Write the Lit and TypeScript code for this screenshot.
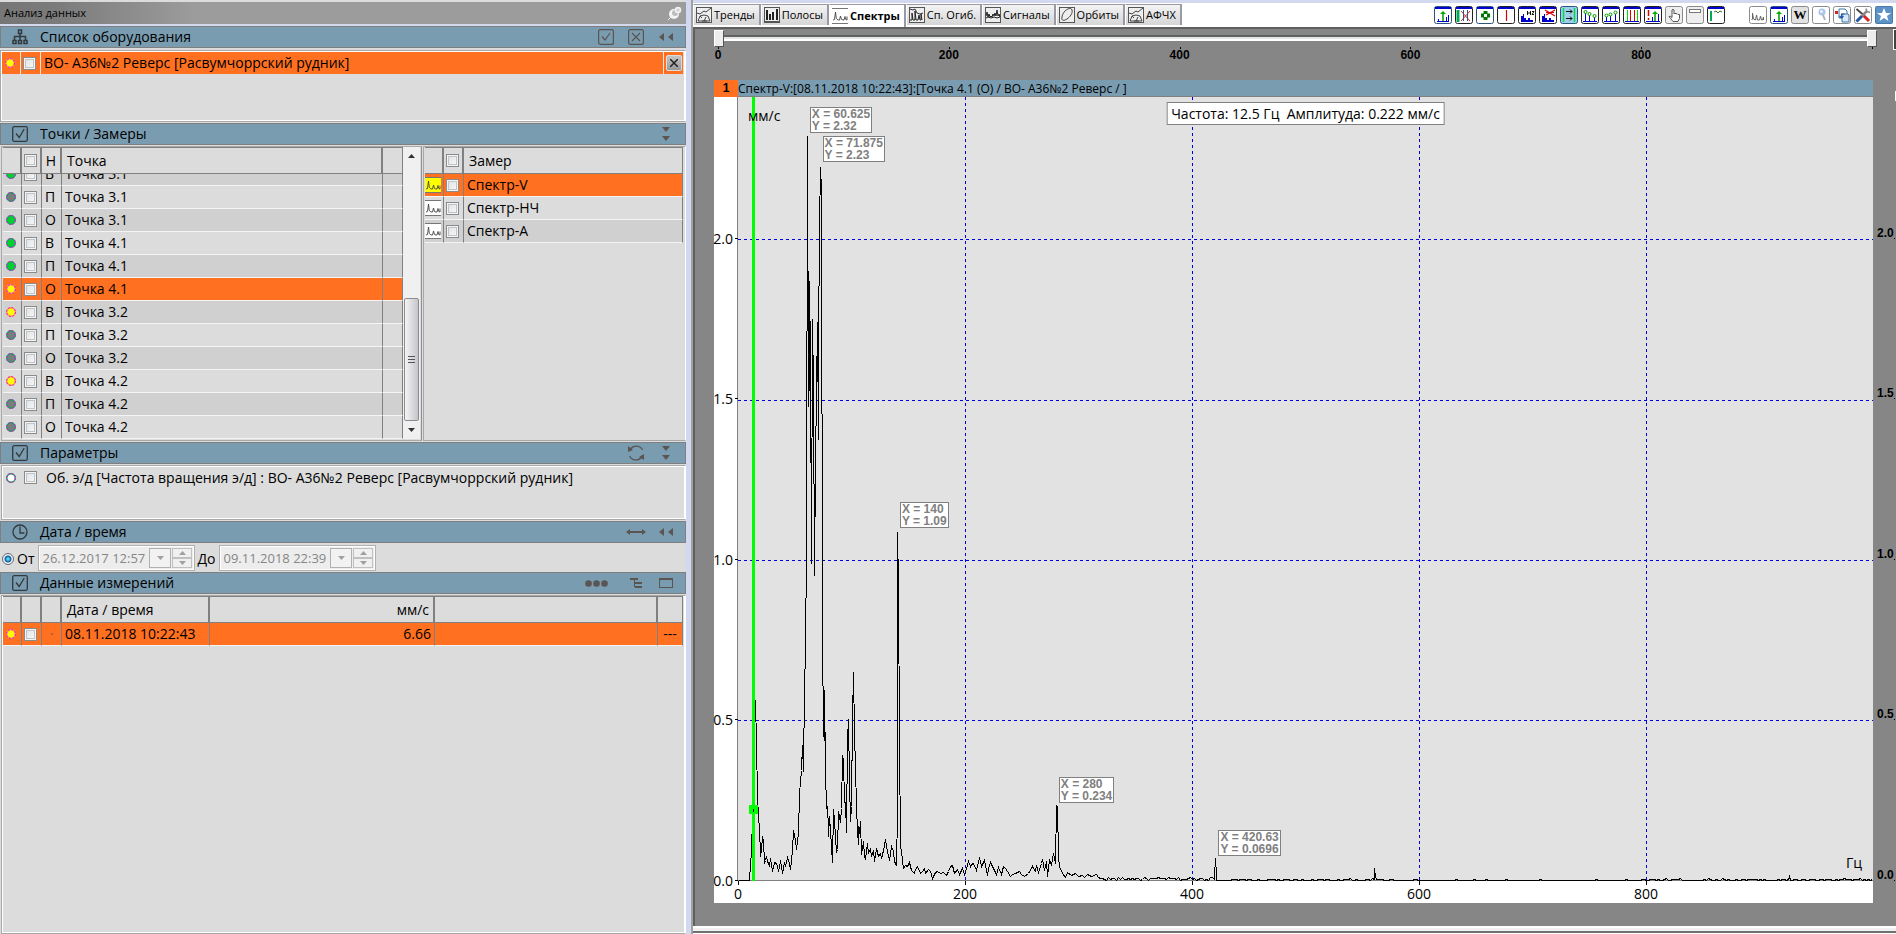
import { LitElement, html, css, svg, nothing } from "lit";
import type { TemplateResult, SVGTemplateResult } from "lit";
import { customElement, state } from "lit/decorators.js";
import { classMap } from "lit/directives/class-map.js";
import { styleMap } from "lit/directives/style-map.js";

type Tone = "green" | "yellow" | "gray" | "none";

const POINTS: Array<[Tone, string, string]> = [
  ["green", "В", "Точка 3.1"],
  ["gray", "П", "Точка 3.1"],
  ["green", "О", "Точка 3.1"],
  ["green", "В", "Точка 4.1"],
  ["green", "П", "Точка 4.1"],
  ["yellow", "О", "Точка 4.1"],
  ["yellow", "В", "Точка 3.2"],
  ["gray", "П", "Точка 3.2"],
  ["gray", "О", "Точка 3.2"],
  ["yellow", "В", "Точка 4.2"],
  ["gray", "П", "Точка 4.2"],
  ["gray", "О", "Точка 4.2"],
];

const MEASURES = ["Спектр-V", "Спектр-НЧ", "Спектр-А"];

/* Plot units: 1135 across = 1000 Hz, 784 high including the axis line. */
const PLOT_W = 1135;
const PLOT_H = 784;
const MAX_Y = 2.442;

/* Spectrum samples as x, height pairs in plot units. */
const SAMPLES: number[] = [
  0,0, 11,0, 12,17, 12,11, 13,33, 14,60, 15,71, 16,140, 17,180, 18,137, 19,85, 20,62, 21,53, 22,24, 23,30, 24,44, 25,40, 26,17,
  27,20, 28,24, 29,19, 31,15, 32,22, 34,9, 36,18, 38,17, 40,10, 41,13, 42,20, 44,7, 46,18, 47,14, 49,23, 51,17, 52,11, 54,30, 55,50, 57,40, 58,31,
  60,47, 61,87, 63,110, 64,135, 65,109, 66,193, 67,228, 68,333, 69,744, 70,474, 70,609, 71,490, 71,599, 72,523, 73,317,
  74,561, 75,493, 76,305, 77,417, 78,489, 79,558, 80,441, 80,530, 81,654, 82,713, 83,690, 84,247, 85,144, 85,163, 86,140, 86,190,
  87,110, 88,72, 88,80, 90,57, 90,44, 91,64, 92,50, 93,34, 94,18, 95,71, 96,60, 98,28, 99,31, 100,69, 102,58, 103,72, 104,125,
  105,121, 106,79, 107,77, 108,48, 109,142, 110,161, 111,99, 112,59, 113,74, 114,162, 115,208, 116,147, 117,113, 118,74,
  119,50, 120,36, 120,54, 121,47, 122,59, 123,26, 125,39, 126,24, 127,21, 129,37, 130,27, 132,32, 133,24, 135,30, 136,19, 138,32,
  140,24, 142,27, 143,22, 145,30, 147,41, 149,29, 151,20, 153,34, 155,29, 156,19, 158,15, 159,67, 159,348, 160,296, 161,139,
  162,34, 163,30, 164,19, 165,12, 167,15, 169,14, 171,18, 173,10, 176,7, 177,11, 179,14, 182,7, 184,9, 186,12, 187,7, 190,11, 192,9, 194,2, 197,8,
  199,9, 202,7, 205,8, 208,5, 210,9, 212,14, 214,15, 216,7, 219,11, 221,6, 224,12, 226,6, 228,12, 230,19, 232,14, 233,16,
  235,17, 238,10, 241,23, 243,14, 246,20, 249,5, 250,12, 252,18, 255,12, 258,6, 260,13, 263,6, 265,14, 267,12, 269,9, 272,4, 274,6, 277,7,
  281,9, 283,6, 286,4, 290,7, 294,14, 295,12, 297,9, 298,15, 300,8, 303,17, 304,21, 306,10, 308,19, 309,4, 311,21, 313,15, 315,27,
  317,17, 318,75, 319,74, 320,24, 321,14, 324,7, 327,3, 329,8, 333,5, 337,7, 340,4, 344,5, 346,3, 349,6, 353,4, 358,6, 360,3,
];

/* Low-level floor with the two small harmonics on it. */
function buildTrace(): string {
  const pts = [...SAMPLES];
  let seed = 17;
  const rnd = () => ((seed = (seed * 1103515245 + 12345) % 2147483648) / 2147483648);
  for (let x = 362; x <= PLOT_W; x += 2) {
    const top = x < 480 ? 3 : x < 600 ? 1.6 : x < 660 ? 2.2 : x < 900 ? 1.1 : 2.1;
    pts.push(x, Math.floor(rnd() * top + (x < 480 ? 0.6 : 0)));
    if (x === 476) pts.push(476, 5, 477, 22, 478, 5);
    if (x === 636) pts.push(636, 4, 636, 12, 637, 4);
    if (x === 1050) pts.push(1051, 4);
  }
  let d = "";
  for (let i = 0; i < pts.length; i += 2) {
    d += `${i ? "L" : "M"}${pts[i] + 0.5} ${PLOT_H - pts[i + 1] - 0.5}`;
  }
  return d;
}

const TRACE = buildTrace();

const PEAKS = [
  { f: 60.625, v: 2.32, x: "60.625", y: "2.32" },
  { f: 71.875, v: 2.23, x: "71.875", y: "2.23" },
  { f: 140, v: 1.09, x: "140", y: "1.09" },
  { f: 280, v: 0.234, x: "280", y: "0.234" },
  { f: 420.63, v: 0.0696, x: "420.63", y: "0.0696" },
];

const pct = (n: number) => `${n * 100}%`;

const ic = (w: number, h: number, body: SVGTemplateResult) =>
  html`<svg class="ic" width=${w} height=${h} viewBox="0 0 ${w} ${h}" aria-hidden="true">${body}</svg>`;

const DOTS: Record<Tone, [string, string]> = {
  green: ["#00d030", "#00b84a"],
  yellow: ["#ffff00", "#ff9a40"],
  gray: ["#7c7c7c", "#00b050"],
  none: ["#ffffff", "#10a050"],
};
const dot = (tone: Tone) =>
  html`<svg class="dot" width="10" height="10" viewBox="0 0 10 10" aria-hidden="true">
    <circle cx="5" cy="5" r="4.200" fill=${DOTS[tone][0]} stroke=${DOTS[tone][1]} stroke-width="1.400"/>
    <circle cx="5" cy="5" r="4.500" fill="none" stroke="#f010f0" stroke-dasharray="2 1.500"/>
  </svg>`;

const dark = "#5a5552";
const icons = {
  tree: ic(16, 16, svg`<g fill="none" stroke="#33393d" stroke-width="1.5"><path d="M6.5 1h3v3.5h-3zM8 5v6M2.5 11V7.5h11V11M1 11.5h3v3H1zM6.5 11.5h3v3h-3zM12 11.5h3v3h-3z"/></g>`),
  check: ic(16, 16, svg`<g fill="none" stroke="#33393d" stroke-width="1.3"><rect x=".7" y=".7" width="14.6" height="14.6" rx="1.5"/><path d="M4 7.5l3.2 4 5-8.5"/></g>`),
  clock: ic(16, 16, svg`<g fill="none" stroke="#33393d" stroke-width="1.3"><circle cx="8" cy="8" r="7"/><path d="M8 2.5V9h4.5"/></g>`),
  checkBtn: ic(16, 16, svg`<g fill="none" stroke=${dark} stroke-width="1.2"><rect x=".6" y=".6" width="14.8" height="14.8" rx="2"/><path d="M4 7.5l3 3.5 5-7"/></g>`),
  crossBtn: ic(16, 16, svg`<g fill="none" stroke=${dark} stroke-width="1.2"><rect x=".6" y=".6" width="14.8" height="14.8" rx="2"/><path d="M4 4l8 8M12 4l-8 8"/></g>`),
  left: ic(16, 8, svg`<path d="M6 0v8L1 4zM15 0v8l-5-4z" fill=${dark}/>`),
  down: ic(8, 14, svg`<path d="M0 0h8L4 5zM0 9h8l-4 5z" fill=${dark}/>`),
  refresh: ic(18, 18, svg`<g fill="none" stroke=${dark} stroke-width="1.3"><path d="M3.5 5A7 7 0 0 1 15.5 6M14.5 13A7 7 0 0 1 2.5 12"/></g><path d="M1 2v6l5-2zM17 16v-6l-5 3z" fill=${dark}/>`),
  wide: ic(20, 6, svg`<path d="M0 3l4-3v2h12V0l4 3-4 3V4H4v2z" fill=${dark}/>`),
  dots: ic(23, 7, svg`<g fill=${dark}><circle cx="3.5" cy="3.5" r="3.3"/><circle cx="11.5" cy="3.5" r="3.3"/><circle cx="19.5" cy="3.5" r="3.3"/></g>`),
  levels: ic(12, 10, svg`<g fill=${dark}><path d="M0 0h8v2H0zM5 4h7v2H5zM5 8h7v2H5zM4 2h1v7H4z"/></g>`),
  window: ic(14, 10, svg`<rect x=".5" y=".5" width="13" height="9" fill="none" stroke=${dark}/><path d="M0 0h14v2H0z" fill=${dark}/>`),
  pin: ic(15, 15, svg`<path d="M1 14l4-4" stroke="#e8e8e8"/><circle cx="7" cy="8" r="5" fill="#f4f4f4"/><circle cx="8" cy="7" r="3" fill="#bdbdbd"/><circle cx="11" cy="4" r="3.3" fill="#f0f0f0"/><circle cx="11" cy="4" r="1.5" fill="#cfcfcf"/>`),
};

const spectrumIcon = (bg: string) =>
  ic(16, 16, svg`<rect width="16" height="16" fill=${bg}/><path d="M0 .5h16M0 15.5h16" stroke="#777"/><path d="M1 12l1.500-.5 1-7.500.8 6.500 1.700 1.500h1.500l1-4 1 3.500 1.500.5h1l1-3.500.8 3 1.200.5V8.500" fill="none" stroke="#444" stroke-width=".9"/>`);

const tabFrame = svg`<rect x=".5" y=".5" width="15" height="15" fill="#eee" stroke="#555"/>`;
const gauge = ic(16, 16, svg`${tabFrame}<path d="M1 6l3 1 4-3 2 1 5-4M2 14l2-5 4-1 4 1 2 5zM8 14l2-4M4 9l2 2M6 14h5" fill="none" stroke="#444"/>`);
const TABS: Array<[string, TemplateResult]> = [
  ["Тренды", gauge],
  ["Полосы", ic(16, 16, svg`${tabFrame}<path d="M2 3h2v10H2zM5 7h2v6H5zM8 5h2v8H8zM12 2h2v11h-2z" fill="#222"/><path d="M1 14.5h14" stroke="#555"/>`)],
  ["Спектры", spectrumIcon("#fff")],
  ["Сп. Огиб.", ic(16, 16, svg`${tabFrame}<path d="M1 2l3 1 2-1 2 4 3 1 3-1" fill="none" stroke="#333"/><path d="M1 13h2V6l1 7h2V4l1 9h2l1-5 1 5h1V7l1 6" fill="none" stroke="#222"/>`)],
  ["Сигналы", ic(16, 16, svg`${tabFrame}<path d="M1 9l1-4 1 5 1-3 1 3 1-1 1 1 1-3 1 2 1-3 1 3 1-6 1 6 1-2 1 3M1 11l2-1 3 1 3-1 3 1 3-1" fill="none" stroke="#222"/>`)],
  ["Орбиты", ic(16, 16, svg`${tabFrame}<path d="M3 10c-1 4 2 4 5 2s6-6 5-9-5-1-7 1-3 5-3 6z" fill="none" stroke="#444"/>`)],
  ["АФЧХ", gauge],
];

/* Toolbar glyphs share a window-like frame with a blue caption strip. */
const win = (body: SVGTemplateResult, edge = "#222") =>
  svg`<rect x=".5" y=".5" width="17" height="17" rx="2" fill="#fff" stroke=${edge}/><path d="M1 1h16v2H1z" fill="#00c"/>${body}`;
const soft = (body: SVGTemplateResult, bg = "#eee") =>
  svg`<rect x=".5" y=".5" width="17" height="17" rx="2" fill=${bg} stroke="#8a8a8a"/>${body}`;
const arrowBars = svg`<path d="M9 15V8" stroke="#090" stroke-width="1.500"/><path d="M9 5l3 3H6z" fill="#0a0"/><path d="M4.500 15v-2M12.500 15v-4M14.500 15V9M3 15.500h12" stroke="#00c"/>`;
const hz = svg`<path d="M3 16v-6h2v-2h1v4h2v2h2v-2h2v2h3v2z" fill="#00c"/>`;
const TOOLS: Array<[string, SVGTemplateResult]> = [
  ["Пик", win(arrowBars, "#27557c")],
  ["Сброс зоны", win(svg`<path d="M3 4v12" stroke="#0a5" stroke-width="3"/><path d="M6 5l9 10M15 5L6 15" stroke="#d22"/><path d="M8.500 4v11M12.500 4v11" stroke="#357"/>`)],
  ["Перемещение", win(svg`<path d="M7.500 5h4v2.500H14v4h-2.500V14h-4v-2.500H5v-4h2.500z" fill="#070"/><path d="M8 8h3v3H8z" fill="#fff"/>`, "#27557c")],
  ["Курсор", win(svg`<path d="M9.500 4v11" stroke="#d00" stroke-width="1.200"/>`)],
  ["Герцы", win(svg`${hz}<path d="M9.500 5v4M12.500 5v4M9 7h3M14 5.500h2l-2 3h2" stroke="#111" fill="none"/>`)],
  ["Убрать герцы", win(svg`${hz}<path d="M6 4l10 6M16 4L7 9M7 6.500h8" stroke="#d00" stroke-width="1.200"/>`)],
  ["Границы", svg`<rect x=".5" y=".5" width="17" height="17" rx="2" fill="#9fd0ea" stroke="#27557c"/><path d="M3.500 2v14M14.500 2v14" stroke="#0d4" stroke-width="1.500"/><path d="M6 5.500h6M10 3.500l2 2-2 2M6 12.500h6M10 10.500l2 2-2 2" stroke="#111" fill="none"/>`],
  ["Гармоники", win(svg`<path d="M4.500 15V7M8.500 15V9M13.500 15v-4M2 15.500h14" stroke="#00c"/><g fill="#fff" stroke="#090"><circle cx="4.500" cy="6" r="1.500"/><circle cx="8.500" cy="8" r="1.500"/><circle cx="13.500" cy="10" r="1.500"/></g>`)],
  ["Боковые", win(svg`<path d="M4.500 15v-4M8.500 15V9M13.500 15V7M2 15.500h14" stroke="#00c"/><g fill="#fff" stroke="#090"><circle cx="4.500" cy="9.500" r="1.500"/><circle cx="8.500" cy="8.500" r="1.500"/><circle cx="13.500" cy="6.500" r="1.500"/></g>`)],
  ["Полоса", win(svg`<path d="M4.500 4v11M14.500 4v11" stroke="#0d0"/><path d="M7.500 4v11M11.500 4v11" stroke="#d00"/><path d="M2 15.500h14" stroke="#00c"/>`)],
  ["Тревога", win(svg`<path d="M4.500 4v6M4.500 12v2" stroke="#d00" stroke-width="1.500"/><path d="M8.500 15v-4M14.500 15V8M2 15.500h14" stroke="#00c"/><path d="M11 15V8" stroke="#090" stroke-width="1.500"/><path d="M11 5l3 3H8z" fill="#0a0"/>`)],
  ["Рука", soft(svg`<path d="M7 10V4q1-1.500 2 0v4l1-1 1 1 1-.5 1 1 1.500 0v4l-1.500 3H8l-4-5q1-1 3 1z" fill="#fff" stroke="#555"/>`)],
  ["Панель", soft(svg`<rect x="3.500" y="3.500" width="11" height="3" fill="#fff" stroke="#777"/>`)],
  ["Каскад", win(svg`<path d="M4 5v10" stroke="#0a5" stroke-width="2"/><path d="M7 6l2-1 2 2 2-2 2 1" stroke="#373" fill="none"/>`)],
];
const TOOLS2: Array<[string, SVGTemplateResult]> = [
  ["Спектр", soft(svg`<path d="M2.500 14l1-1V7l1 6 2 1 1-5 1 5h2l1-4 1 4h1l1-3v3" fill="none" stroke="#666"/>`, "#fff")],
  ["Пик графика", win(arrowBars, "#27557c")],
  ["Отчёт Word", soft(svg`<text x="9" y="13" text-anchor="middle" class="w">W</text>`, "#e2e2e2")],
  ["Поиск", soft(svg`<circle cx="10" cy="6" r="3.500" fill="#a9c4e4"/><circle cx="9.500" cy="5.500" r="1.500" fill="#eef"/><path d="M11 9l2 5" stroke="#a9b4c4" stroke-width="2"/>`, "#fff")],
  ["Обмен", soft(svg`<path d="M6 3h6l2 2v7H6z" fill="#fff" stroke="#37a"/><path d="M9 8h6l1 1v7H9z" fill="#dbe8fa" stroke="#37a"/><path d="M2 5h3v3H2z" fill="#d22"/><path d="M8.500 12V8h3M8.500 12l-2-2M8.500 12l2-2" stroke="#25a" fill="none" stroke-width="1.200"/>`, "#fff")],
  ["Настройки", soft(svg`<path d="M2.500 3l7 6" stroke="#444" stroke-width="1.800"/><path d="M9 9l6 6" stroke="#d22" stroke-width="3"/><path d="M13 5L8 10" stroke="#888" stroke-width="2.500"/><path d="M12 2.500l1 3 3 1" stroke="#888" stroke-width="1.500" fill="none"/><path d="M8 10l-5.500 5.500" stroke="#25a" stroke-width="3"/>`, "#fff")],
  ["Избранное", svg`<rect x=".5" y=".5" width="17" height="17" rx="1" fill="#5c92c6" stroke="#4a7aa8"/><path d="M9 2l2 5h5l-4 3 1.500 5L9 12l-4.500 3L6 10 2 7h5z" fill="#fff"/>`],
];

type BarButton = { icon: TemplateResult; label: string; wide?: boolean };

@customElement("app-root")
export class AppRoot extends LitElement {
  @state() private tab = 2;

  static styles = css`
    :host {
      display: block;
      height: 100vh;
      min-height: 720px;
      overflow: hidden;
      color: #000;
      font: 14px/20px "Open Sans", "Noto Sans", sans-serif;
    }
    *, *::before, *::after { box-sizing: border-box; }
    button { font: inherit; color: inherit; padding: 0; border: 0; background: none; }
    .ic { display: block; }
    .app { display: flex; height: 100%; background: #d2d9ee; }

    .side { flex: 0 0 686px; display: flex; flex-direction: column; padding-top: 2px; background: #dcdcdc; }
    .caption {
      display: flex; align-items: center; justify-content: space-between;
      height: 24px; padding: 0 4px; border-bottom: 2px solid #d2d9ee;
      background: linear-gradient(90deg, #767676, #7c7c7c 60px, #9c9c9c 195px, #9c9c9c);
      font-size: 11px;
    }
    .bar {
      display: flex; align-items: center; flex: none;
      height: 22px; padding: 0 4px 0 11px;
      border: 1px solid #7f7f7f; background: #7a9cb0;
    }
    .bar h2 { flex: 1; margin: 0 0 0 12px; font-size: 14px; font-weight: 400; line-height: 20px; }
    .bar button { width: 30px; height: 20px; display: grid; place-items: center; }
    .bar button.wide { width: 50px; }
    .box { flex: none; border: 1px solid #a8a8a8; border-right-color: #fff; outline: 1px solid #fff; outline-offset: -2px; padding: 1px; background: #dcdcdc; }

    .list { height: 72px; margin: 2px 0 1px; padding-right: 2px; }
    .item { display: grid; grid-template-columns: 18px 20px 1fr 20px; height: 22px; background: #ff7020; }
    .item > * { display: flex; align-items: center; border-left: 1px solid #f0e8e0; }
    .item > *:first-child { border-left: 0; }
    .item .name { padding-left: 3px; }
    .close { width: 16px; height: 16px; margin-left: 2px; display: grid; place-items: center; border: 1px solid #ddd; border-radius: 2px; background: linear-gradient(#c4c4c4, #999); }

    input[type="checkbox"] {
      appearance: none; display: block; width: 13px; height: 13px; margin: 0 0 0 2px;
      border: 1px solid #8a8b8b; background: linear-gradient(135deg, #dcdfe2, #fafafa);
      box-shadow: inset 0 0 0 1px #f4f4f4, inset 0 0 0 2px #c0c4c8;
    }
    .dot { display: block; margin-left: 3px; }

    table { border-collapse: separate; border-spacing: 0; table-layout: fixed; width: 100%; }
    th, td { padding: 0; font-weight: 400; text-align: left; white-space: nowrap; }
    thead th { height: 27px; line-height: 24px; border-top: 1px solid #808080; border-bottom: 1px solid #808080; border-right: 2px solid #808080; background: #dcdcdc; }
    thead th:last-child { border-right-width: 1px; }
    thead { position: sticky; top: 0; z-index: 1; }
    td { height: 23px; line-height: 22px; border-right: 1px solid #808080; border-bottom: 1px solid #f4f4f4; }
    tbody tr:nth-child(odd) { background: #d0d0d0; }
    tbody tr:nth-child(even) { background: #dcdcdc; }
    tbody tr.on { background: #ff7020; }
    .c1 { width: 19px; }
    .c2 { width: 20px; }
    .t { padding-left: 3px; }
    th.t { padding-left: 5px; }
    .num { text-align: right; padding-right: 4px; }
    td.num { padding-right: 3px; }
    .mid { text-align: center; }
    .faint { color: #806050; }

    .points { flex: none; display: flex; height: 295px; margin: 1px 0 1px 1px; }
    .pane { display: flex; flex: 0 0 421px; border: 1px solid #a8a8a8; border-right-color: #909090; padding: 0 1px 1px; }
    .scroll { flex: 1; min-width: 0; overflow: hidden; height: 292px; }
    .pane2 { flex: 1; min-width: 0; margin-left: 1px; padding: 0 2px 0 1px; border: 1px solid #a8a8a8; border-right-color: #fff; }
    .pane2 tbody tr:nth-child(2) { background: #dcdcdc; }
    .sb { flex: 0 0 17px; display: flex; flex-direction: column; align-items: center; background: #f0f0f0; }
    .sb button { width: 17px; height: 18px; display: grid; place-items: center; }
    .sb .gap { flex: 1; }
    .sb .thumb { width: 15px; height: 123px; border: 1px solid #8c8c90; border-radius: 2px; background: linear-gradient(90deg, #f4f4f4, #d8d8dc 60%, #c4c4ca); display: grid; place-items: center; }

    .params { height: 55px; margin: 1px 0 1px 1px; }
    .param { display: grid; grid-template-columns: 19px 20px 1fr; align-items: center; height: 21px; }
    .param span { padding-left: 4px; }

    .dates { flex: none; display: flex; align-items: center; height: 29px; padding-left: 2px; font-size: 14px; }
    .dates input[type="radio"] { appearance: none; width: 12px; height: 12px; margin: 3px 3px 0 0; border: 1px solid #667; border-radius: 50%; background: radial-gradient(circle, #5cf 0 1px, #0a5a92 3px, #f4f4f4 4px); }
    .dates label { margin: 3px 4px 0 0; }
    .dt { display: flex; height: 26px; margin-right: 2px; padding: 1px 2px 1px 1px; border: 1px solid #b0b0b0; outline: 1px solid #fff; outline-offset: -2px; background: #ededed; }
    .dt input { width: 109px; border: 0; padding: 0 0 0 2px; background: #ededed; color: #868686; font: inherit; font-size: 13px; }
    .dt .drop { width: 22px; margin: 1px 1px 1px 0; border: 1px solid #b0b0b0; background: #f2f2f2; display: grid; place-items: center; }
    .spin { display: flex; flex-direction: column; margin: 1px 0; }
    .spin button { flex: 1; width: 20px; border: 1px solid #c0c0c0; background: #f0f0f0; display: grid; place-items: center; }
    .data { flex: 1; margin: 1px 0 0 1px; padding: 0 2px 0 1px; }
    .d3 { width: 148px; }
    .d4 { width: 225px; }
    .d6 { width: 25px; }

    .main { flex: 1; min-width: 0; display: flex; flex-direction: column; margin-left: 5px; border-left: 2px solid #a0a0a0; background: #fff; }
    .top { flex: none; display: flex; align-items: flex-start; height: 27px; border-top: 3px solid #d2d9ee; padding-right: 3px; }
    .tabs { display: flex; }
    .tabs button {
      display: flex; align-items: center; gap: 2px; height: 21px; margin-top: 1px; padding: 0 4px 0 2px;
      border: 1px solid #9a9aa4; border-left-color: #fff; border-width: 1px 2px 0 1px;
      background: linear-gradient(#f4f4f4, #d6d6d6); font-size: 11px; line-height: 18px;
    }
    .tabs button.on { height: 23px; background: #fff; font-weight: 700; }
    .tools { margin: 3px 0 0 auto; display: flex; gap: 3px; }
    .tools .split { width: 18px; }
    .tools svg { display: block; width: 18px; height: 18px; }
    .tools .w { font: 700 13px "Liberation Serif", serif; }

    .stage { position: relative; flex: 1; min-height: 0; display: flex; flex-direction: column; border-top: 2px solid #5f5f5f; border-left: 2px solid #606060; background: #868686; overflow: hidden; }
    .edge { position: absolute; top: 0; right: 0; width: 3px; height: 21px; border: 1px solid #fff; border-width: 1px 0 1px 1px; background: #444; }
    .knob { position: absolute; top: 62px; right: 0; width: 1px; height: 10px; background: #fff; }
    .range { flex: none; position: relative; height: 51px; margin: 0 19px; }
    .range .track { height: 6px; margin: 0 8px; border-top: 2px solid #606060; border-bottom: 2px solid #fff; background: #e4e8e4; }
    .range .pad { height: 6px; }
    .range input { position: absolute; left: 0; top: 0; width: 100%; height: 18px; margin: 0; appearance: none; background: none; pointer-events: none; }
    .range input::-webkit-slider-thumb { appearance: none; width: 10px; height: 17px; border: 1px solid #fff; border-right-color: #555; border-bottom-color: #555; background: #ececec; pointer-events: auto; }
    .scale { position: relative; height: 20px; margin: 6px 5px 0 4px; font: 700 12px/14px "Liberation Sans", sans-serif; }
    .scale span { position: absolute; top: 0; transform: translateX(-50%); padding-top: 1px; }
    .scale i { position: absolute; top: 0; width: 1px; height: 2px; background: #000; }

    .chart { flex: 1; min-height: 0; display: grid; grid-template-columns: 24px 1fr 23px; grid-template-rows: 17px 1fr 22px; margin: 0 0 23px 19px; }
    .num1 { background: #ff7020; font: 700 12px/17px "Liberation Sans", sans-serif; text-align: center; }
    .ttl { background: #7a9cb0; font-size: 12px; line-height: 17px; white-space: nowrap; overflow: hidden; border-bottom: 1px solid #808080; }
    .yax, .rax, .xax { position: relative; }
    .yax { z-index: 1; background: #fff; border-right: 1px solid #808080; }
    .yax span { position: absolute; right: 4px; line-height: 16px; transform: translateY(50%); }
    .yax i { position: absolute; right: -1px; width: 3px; height: 1px; background: #000; }
    .rax { font: 700 12px/14px "Liberation Sans", sans-serif; }
    .rax span { position: absolute; left: 4px; line-height: 12px; }
    .rax i { position: absolute; right: 1px; width: 1px; height: 1px; background: #000; }
    .xax { grid-column: 1 / 3; background: #fff; }
    .xin { position: absolute; inset: 0 0 0 24px; }
    .xax span { position: absolute; top: 4px; transform: translateX(-50%); line-height: 18px; }
    .xax i { position: absolute; top: 0; width: 1px; height: 4px; background: #000; }
    .plot { position: relative; background: #e2e2e2; }
    .plot > svg { position: absolute; inset: 0; width: 100%; height: 100%; }
    .unit { position: absolute; }
    .unit.y { left: 10px; top: 9px; }
    .unit.x { right: 11px; bottom: 8px; }
    .tip { position: absolute; margin: 0 0 3px 3px; padding: 0 1px; border: 1px solid #808080; background: #fff; color: #808080; font: 700 12px/12px "Liberation Sans", sans-serif; white-space: nowrap; }
    .info { position: absolute; left: 50%; top: 5px; transform: translateX(-50%); padding: 0 4px; border: 1px solid #808080; background: #fff; line-height: 21px; white-space: pre; }
    .foot { flex: none; height: 8px; border-top: 2px solid #fff; background: linear-gradient(#f0f0f0 0 3px, #707070 3px 5px, #fff 5px); }
  `;

  firstUpdated() {
    const s = this.renderRoot.querySelector(".scroll");
    if (s) s.scrollTop = s.scrollHeight;
  }

  private bar(icon: TemplateResult, title: string, buttons: BarButton[]) {
    return html`<header class="bar">
      ${icon}
      <h2>${title}</h2>
      ${buttons.map((b) => html`<button class=${classMap({ wide: !!b.wide })} aria-label=${b.label}>${b.icon}</button>`)}
    </header>`;
  }

  private cb(label: string) {
    return html`<input type="checkbox" aria-label=${label} />`;
  }

  private tri(up: boolean, fill: string) {
    return ic(7, 4, svg`<path d=${up ? "M0 4h7L3.500 0z" : "M0 0h7L3.500 4z"} fill=${fill}/>`);
  }

  private dateField(id: string, value: string) {
    return html`<span class="dt">
      <input id=${id} type="text" .value=${value} disabled />
      <button class="drop" aria-label="Календарь" disabled>${this.tri(false, "#a0a0a0")}</button>
      <span class="spin">
        <button aria-label="Больше" disabled>${this.tri(true, "#a0a0a0")}</button>
        <button aria-label="Меньше" disabled>${this.tri(false, "#a0a0a0")}</button>
      </span>
    </span>`;
  }

  private side() {
    return html`<aside class="side">
      <div class="caption"><span>Анализ данных</span>${icons.pin}</div>

      ${this.bar(icons.tree, "Список оборудования", [
        { icon: icons.checkBtn, label: "Отметить всё" },
        { icon: icons.crossBtn, label: "Снять всё" },
        { icon: icons.left, label: "Свернуть" },
      ])}
      <div class="box list">
        <div class="item">
          <span>${dot("yellow")}</span>
          <span>${this.cb("ВО- А36№2 Реверс")}</span>
          <span class="name">ВО- А36№2 Реверс [Расвумчоррский рудник]</span>
          <span><button class="close" aria-label="Удалить">${ic(8, 8, svg`<path d="M0 0l8 8M8 0L0 8" stroke="#222" stroke-width="1.500"/>`)}</button></span>
        </div>
      </div>

      ${this.bar(icons.check, "Точки / Замеры", [{ icon: icons.down, label: "Развернуть" }])}
      <div class="points">
        <div class="pane">
          <div class="scroll">
            <table>
              <thead><tr>
                <th class="c1"></th><th class="c2">${this.cb("Все точки")}</th><th class="c2 mid">Н</th>
                <th class="t">Точка</th><th class="c2"></th>
              </tr></thead>
              <tbody>
                ${POINTS.map(([tone, dir, name], i) => html`<tr class=${classMap({ on: i === 5 })}>
                  <td>${dot(tone)}</td><td>${this.cb(`${name} ${dir}`)}</td>
                  <td class="t">${dir}</td><td class="t">${name}</td><td></td>
                </tr>`)}
              </tbody>
            </table>
          </div>
          <div class="sb">
            <button aria-label="Вверх">${this.tri(true, "#333")}</button>
            <span class="gap"></span>
            <span class="thumb">${ic(7, 8, svg`<path d="M0 .5h7M0 3.500h7M0 6.500h7" stroke="#555"/>`)}</span>
            <button aria-label="Вниз">${this.tri(false, "#333")}</button>
          </div>
        </div>
        <div class="pane2">
          <table>
            <thead><tr><th class="c1"></th><th class="c2">${this.cb("Все замеры")}</th><th class="t">Замер</th></tr></thead>
            <tbody>
              ${MEASURES.map((m, i) => html`<tr class=${classMap({ on: i === 0 })}>
                <td>${spectrumIcon(i === 0 ? "#ffff00" : "#fff")}</td>
                <td>${this.cb(m)}</td><td class="t">${m}</td>
              </tr>`)}
            </tbody>
          </table>
        </div>
      </div>

      ${this.bar(icons.check, "Параметры", [
        { icon: icons.refresh, label: "Обновить" },
        { icon: icons.down, label: "Развернуть" },
      ])}
      <div class="box params">
        <div class="param">
          ${dot("none")}${this.cb("Об. э/д")}
          <span>Об. э/д [Частота вращения э/д] : ВО- А36№2 Реверс [Расвумчоррский рудник]</span>
        </div>
      </div>

      ${this.bar(icons.clock, "Дата / время", [
        { icon: icons.wide, label: "По ширине" },
        { icon: icons.left, label: "Свернуть" },
      ])}
      <div class="dates">
        <input type="radio" checked aria-label="Интервал" />
        <label for="from">От</label>${this.dateField("from", "26.12.2017 12:57")}
        <label for="to">До</label>${this.dateField("to", "09.11.2018 22:39")}
      </div>

      ${this.bar(icons.check, "Данные измерений", [
        { icon: icons.dots, label: "Ещё", wide: true },
        { icon: icons.levels, label: "Уровни" },
        { icon: icons.window, label: "Окно" },
      ])}
      <div class="box data">
        <table>
          <thead><tr>
            <th class="c1"></th><th class="c2"></th><th class="c2"></th><th class="t d3">Дата / время</th>
            <th class="num d4">мм/с</th><th></th><th class="d6"></th>
          </tr></thead>
          <tbody><tr class="on">
            <td>${dot("yellow")}</td><td>${this.cb("08.11.2018 10:22:43")}</td><td class="mid faint">·</td>
            <td class="t">08.11.2018 10:22:43</td><td class="num">6.66</td><td></td><td class="mid">---</td>
          </tr></tbody>
        </table>
      </div>
    </aside>`;
  }

  private chart() {
    const hs = [200, 400, 600, 800];
    const vs = [0.5, 1, 1.5, 2];
    const py = (v: number) => Math.ceil(PLOT_H - 1 - v * 320.5) + 0.5;
    return html`<section class="chart">
      <div class="num1">1</div>
      <div class="ttl">Спектр-V:[08.11.2018 10:22:43]:[Точка 4.1 (О) / ВО- А36№2 Реверс / ]</div>
      <div></div>

      <div class="yax">
        ${[0, ...vs].map((v) => html`<span style=${styleMap({ bottom: pct(v / MAX_Y) })}>${v.toFixed(1)}</span><i style=${styleMap({ bottom: pct(v / MAX_Y) })}></i>`)}
      </div>
      <div class="plot">
        <svg viewBox="0 0 ${PLOT_W} ${PLOT_H}" preserveAspectRatio="none" shape-rendering="crispEdges">
          <g stroke="#0000e0" stroke-dasharray="3 3">
            ${hs.map((f) => svg`<path d="M${(f / 1000) * PLOT_W + 0.5} 0V${PLOT_H}"/>`)}
            ${vs.map((v) => svg`<path d="M0 ${py(v)}H${PLOT_W}"/>`)}
          </g>
          <path d="M0 ${PLOT_H - 0.5}H${PLOT_W}" stroke="#808080"/>
          <path d=${TRACE} fill="none" stroke="#000"/>
          <path d="M15.500 0V${PLOT_H}" stroke="#00ff00" stroke-width="3"/>
          <rect x="12.500" y="709.500" width="6" height="6" fill="#00ff00" stroke="#00ff00" stroke-width="3"/>
          <path d="M15 712h1v3h-1z" fill="#000"/>
        </svg>
        <span class="unit y">мм/с</span>
        <span class="unit x">Гц</span>
        ${PEAKS.map((p) => html`<div class="tip" style=${styleMap({ left: pct(p.f / 1000), bottom: pct(p.v / MAX_Y) })}>X = ${p.x}<br />Y = ${p.y}</div>`)}
        <output class="info">Частота: 12.5 Гц  Амплитуда: 0.222 мм/с</output>
      </div>
      <div class="rax">
        ${[0, ...vs].map((v) => html`<span style=${styleMap({ bottom: pct(v / MAX_Y) })}>${v.toFixed(1)}</span><i style=${styleMap({ bottom: pct(v / MAX_Y) })}></i>`)}
      </div>
      <div class="xax"><div class="xin">
        ${[0, ...hs].map((f) => html`<span style=${styleMap({ left: pct(f / 1000) })}>${f}</span><i style=${styleMap({ left: pct(f / 1000) })}></i>`)}
      </div></div>
    </section>`;
  }

  render() {
    return html`<div class="app">
      ${this.side()}
      <main class="main">
        <div class="top">
          <nav class="tabs" role="tablist">
            ${TABS.map(([name, icon], i) => html`<button role="tab" class=${classMap({ on: i === this.tab })} aria-selected=${i === this.tab} @click=${() => (this.tab = i)}>${icon}<span>${name}</span></button>`)}
          </nav>
          <div class="tools">
            ${TOOLS.map(([l, g]) => html`<button aria-label=${l}><svg viewBox="0 0 18 18">${g}</svg></button>`)}
            <span class="split"></span>
            ${TOOLS2.map(([l, g]) => html`<button aria-label=${l}><svg viewBox="0 0 18 18">${g}</svg></button>`)}
          </div>
        </div>
        <div class="stage">
          <div class="range">
            <div class="pad"></div>
            <div class="track"></div>
            <input type="range" min="0" max="1000" .value=${"0"} aria-label="Начало диапазона" />
            <input type="range" min="0" max="1000" .value=${"1000"} aria-label="Конец диапазона" />
            <div class="scale">
              ${[0, 200, 400, 600, 800, 1000].map((f) => html`<i style=${styleMap({ left: pct(f / 1000) })}></i>${f < 1000 ? html`<span style=${styleMap({ left: pct(f / 1000) })}>${f}</span>` : nothing}`)}
            </div>
          </div>
          ${this.chart()}
          <span class="edge"></span>
          <span class="knob"></span>
        </div>
        <div class="foot"></div>
      </main>
    </div>`;
  }
}
